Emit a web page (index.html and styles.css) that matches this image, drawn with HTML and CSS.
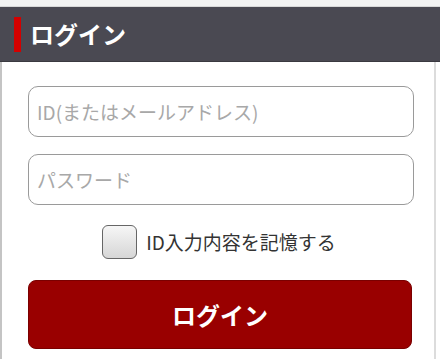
FILE: index.html
```html
<!DOCTYPE html>
<html lang="ja">
<head>
<meta charset="utf-8">
<link rel="stylesheet" href="styles.css">
</head>
<body>
<div class="topstrip"></div>
<header class="header"><span class="mark"></span><h1 class="title">ログイン</h1></header>
<main class="content">
  <form class="form">
    <input class="field" type="text" placeholder="ID(またはメールアドレス)">
    <input class="field" type="password" placeholder="パスワード">
    <label class="remember"><span class="check"></span><span class="remember-text">ID入力内容を記憶する</span></label>
    <button class="submit" type="button">ログイン</button>
  </form>
</main>
</body>
</html>
```
FILE: styles.css
```css
html, body {
  margin: 0;
  padding: 0;
  background: #fff;
  font-family: "Noto Sans CJK JP", "Noto Sans", sans-serif;
}
.topstrip {
  height: 6px;
  background: #f2f2f2;
  border-bottom: 1px solid #d8d8d8;
}
.header {
  height: 54px;
  background: #4a4952;
  border-bottom: 1px solid #3a3940;
  display: flex;
  align-items: center;
  padding-left: 14px;
}
.mark {
  width: 7px;
  height: 35px;
  background: #d40000;
  margin-right: 9px;
}
.title {
  margin: 0;
  color: #fff;
  font-size: 24px;
  font-weight: bold;
  line-height: 1;
}
.content {
  border-left: 2px solid #c4c4c4;
  border-right: 2px solid #dcdcdc;
  margin-right: 4px;
  height: 297px;
  box-sizing: border-box;
}
.form {
  display: flex;
  flex-direction: column;
  padding: 24px 20px 0 26px;
}
.field {
  height: 51px;
  box-sizing: border-box;
  border: 1px solid #9a9a9a;
  border-radius: 10px;
  padding: 0 8px;
  font-family: inherit;
  font-size: 19px;
  color: #333;
  margin-bottom: 17px;
  outline: none;
  background: #fff;
}
.field::placeholder {
  color: #a8a8a8;
}
.remember {
  display: flex;
  align-items: center;
  justify-content: center;
  margin-top: 2px;
  margin-left: -4px;
  height: 35px;
}
.check {
  width: 35px;
  height: 34px;
  box-sizing: border-box;
  border: 1px solid #666;
  border-radius: 6px;
  background: linear-gradient(#f6f6f6, #d6d6d6);
  margin-right: 9px;
}
.remember-text {
  font-size: 19px;
  color: #333;
}
.submit {
  margin-top: 21px;
  height: 69px;
  width: 384px;
  border: 1px solid #7a0000;
  border-radius: 8px;
  background: #990000;
  color: #fff;
  font-family: inherit;
  font-size: 24px;
  font-weight: bold;
}
```
